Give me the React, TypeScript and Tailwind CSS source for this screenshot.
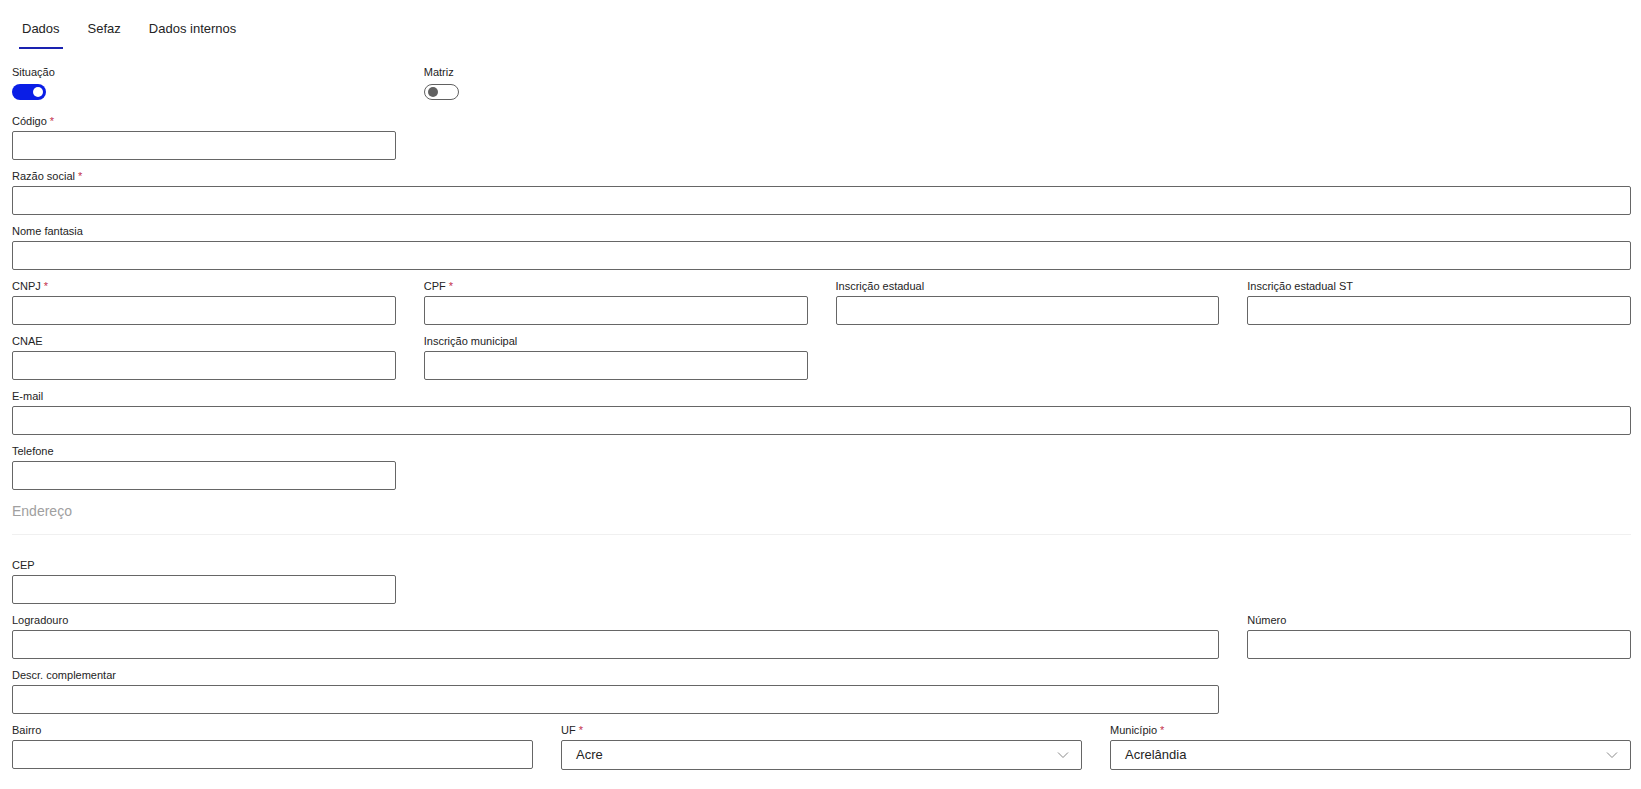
import React from 'react';

const font = { fontFamily: '"Liberation Sans", Arial, sans-serif' };

const Label = ({ text, required }: { text: string; required?: boolean }) => (
    <label className="block h-[16px] text-[11px] leading-[16px] text-[#242424]">
        {text}
        {required && <span className="ml-[3px] text-[#c4314b]">*</span>}
    </label>
);

const Field = ({ label, required, span }: { label: string; required?: boolean; span: string }) => (
    <div className={span}>
        <Label text={label} required={required} />
        <input
            type="text"
            className="mt-[2px] block h-[29px] w-full rounded-[2px] border border-[#666666] bg-white px-2 text-[13px] outline-none"
        />
    </div>
);

const SelectField = ({ label, value, span }: { label: string; value: string; span: string }) => (
    <div className={span}>
        <Label text={label} required />
        <div className="mt-[2px] flex h-[30px] w-full items-center justify-between rounded-[2px] border border-[#666666] bg-white pl-[14px] pr-[12px]">
            <span className="text-[13px] text-[#242424]">{value}</span>
            <svg width="12" height="8" viewBox="0 0 12 8" fill="none">
                <path d="M1 1.5 L6 6.5 L11 1.5" stroke="#8a8a8a" strokeWidth="1" />
            </svg>
        </div>
    </div>
);

const Toggle = ({ on }: { on: boolean }) =>
    on ? (
        <div className="mt-[4px] flex h-[16px] w-[34px] items-center justify-end rounded-full bg-[#0a1ee6] pr-[3px]">
            <div className="h-[10px] w-[10px] rounded-full bg-white" />
        </div>
    ) : (
        <div className="mt-[4px] flex h-[16px] w-[35px] items-center rounded-full border border-[#616161] bg-white pl-[3px]">
            <div className="h-[10px] w-[10px] rounded-full bg-[#616161]" />
        </div>
    );

const tabs = ['Dados', 'Sefaz', 'Dados internos'];

export default function App() {
    return (
        <div className="min-h-screen bg-white pl-[12px] pr-[10px]" style={font}>
            {/* Tabs */}
            <div className="flex gap-[22px] pt-[10px] pl-[7px]">
                {tabs.map((t, i) => (
                    <button
                        key={t}
                        className={
                            'flex h-[39px] items-center px-[3px] text-[13px] text-[#242424] ' +
                            (i === 0 ? 'border-b-2 border-[#1a22b0]' : 'border-b-2 border-transparent')
                        }
                    >
                        {t}
                    </button>
                ))}
            </div>

            <div className="mt-[15px] grid grid-cols-12 gap-x-[28px] gap-y-[8px]">
                <div className="col-span-3 pb-[5px]">
                    <Label text="Situação" />
                    <Toggle on />
                </div>
                <div className="col-span-3 pb-[5px]">
                    <Label text="Matriz" />
                    <Toggle on={false} />
                </div>
                <div className="col-span-6" />

                <Field label="Código" required span="col-span-3" />
                <div className="col-span-9" />
                <Field label="Razão social" required span="col-span-12" />
                <Field label="Nome fantasia" span="col-span-12" />
                <Field label="CNPJ" required span="col-span-3" />
                <Field label="CPF" required span="col-span-3" />
                <Field label="Inscrição estadual" span="col-span-3" />
                <Field label="Inscrição estadual ST" span="col-span-3" />
                <Field label="CNAE" span="col-span-3" />
                <Field label="Inscrição municipal" span="col-span-3" />
                <div className="col-span-6" />
                <Field label="E-mail" span="col-span-12" />
                <Field label="Telefone" span="col-span-3" />
                <div className="col-span-9" />
            </div>

            {/* Endereço */}
            <div className="mt-[11px] border-b border-[#f0f0f0] pb-[13px] text-[14px] leading-[20px] text-[#a0a0a0]">
                Endereço
            </div>

            <div className="mt-[22px] grid grid-cols-12 gap-x-[28px] gap-y-[8px]">
                <Field label="CEP" span="col-span-3" />
                <div className="col-span-9" />
                <Field label="Logradouro" span="col-span-9" />
                <Field label="Número" span="col-span-3" />
                <Field label="Descr. complementar" span="col-span-9" />
                <div className="col-span-3" />
                <Field label="Bairro" span="col-span-4" />
                <SelectField label="UF" value="Acre" span="col-span-4" />
                <SelectField label="Município" value="Acrelândia" span="col-span-4" />
            </div>
            <div className="h-[20px]" />
        </div>
    );
}
